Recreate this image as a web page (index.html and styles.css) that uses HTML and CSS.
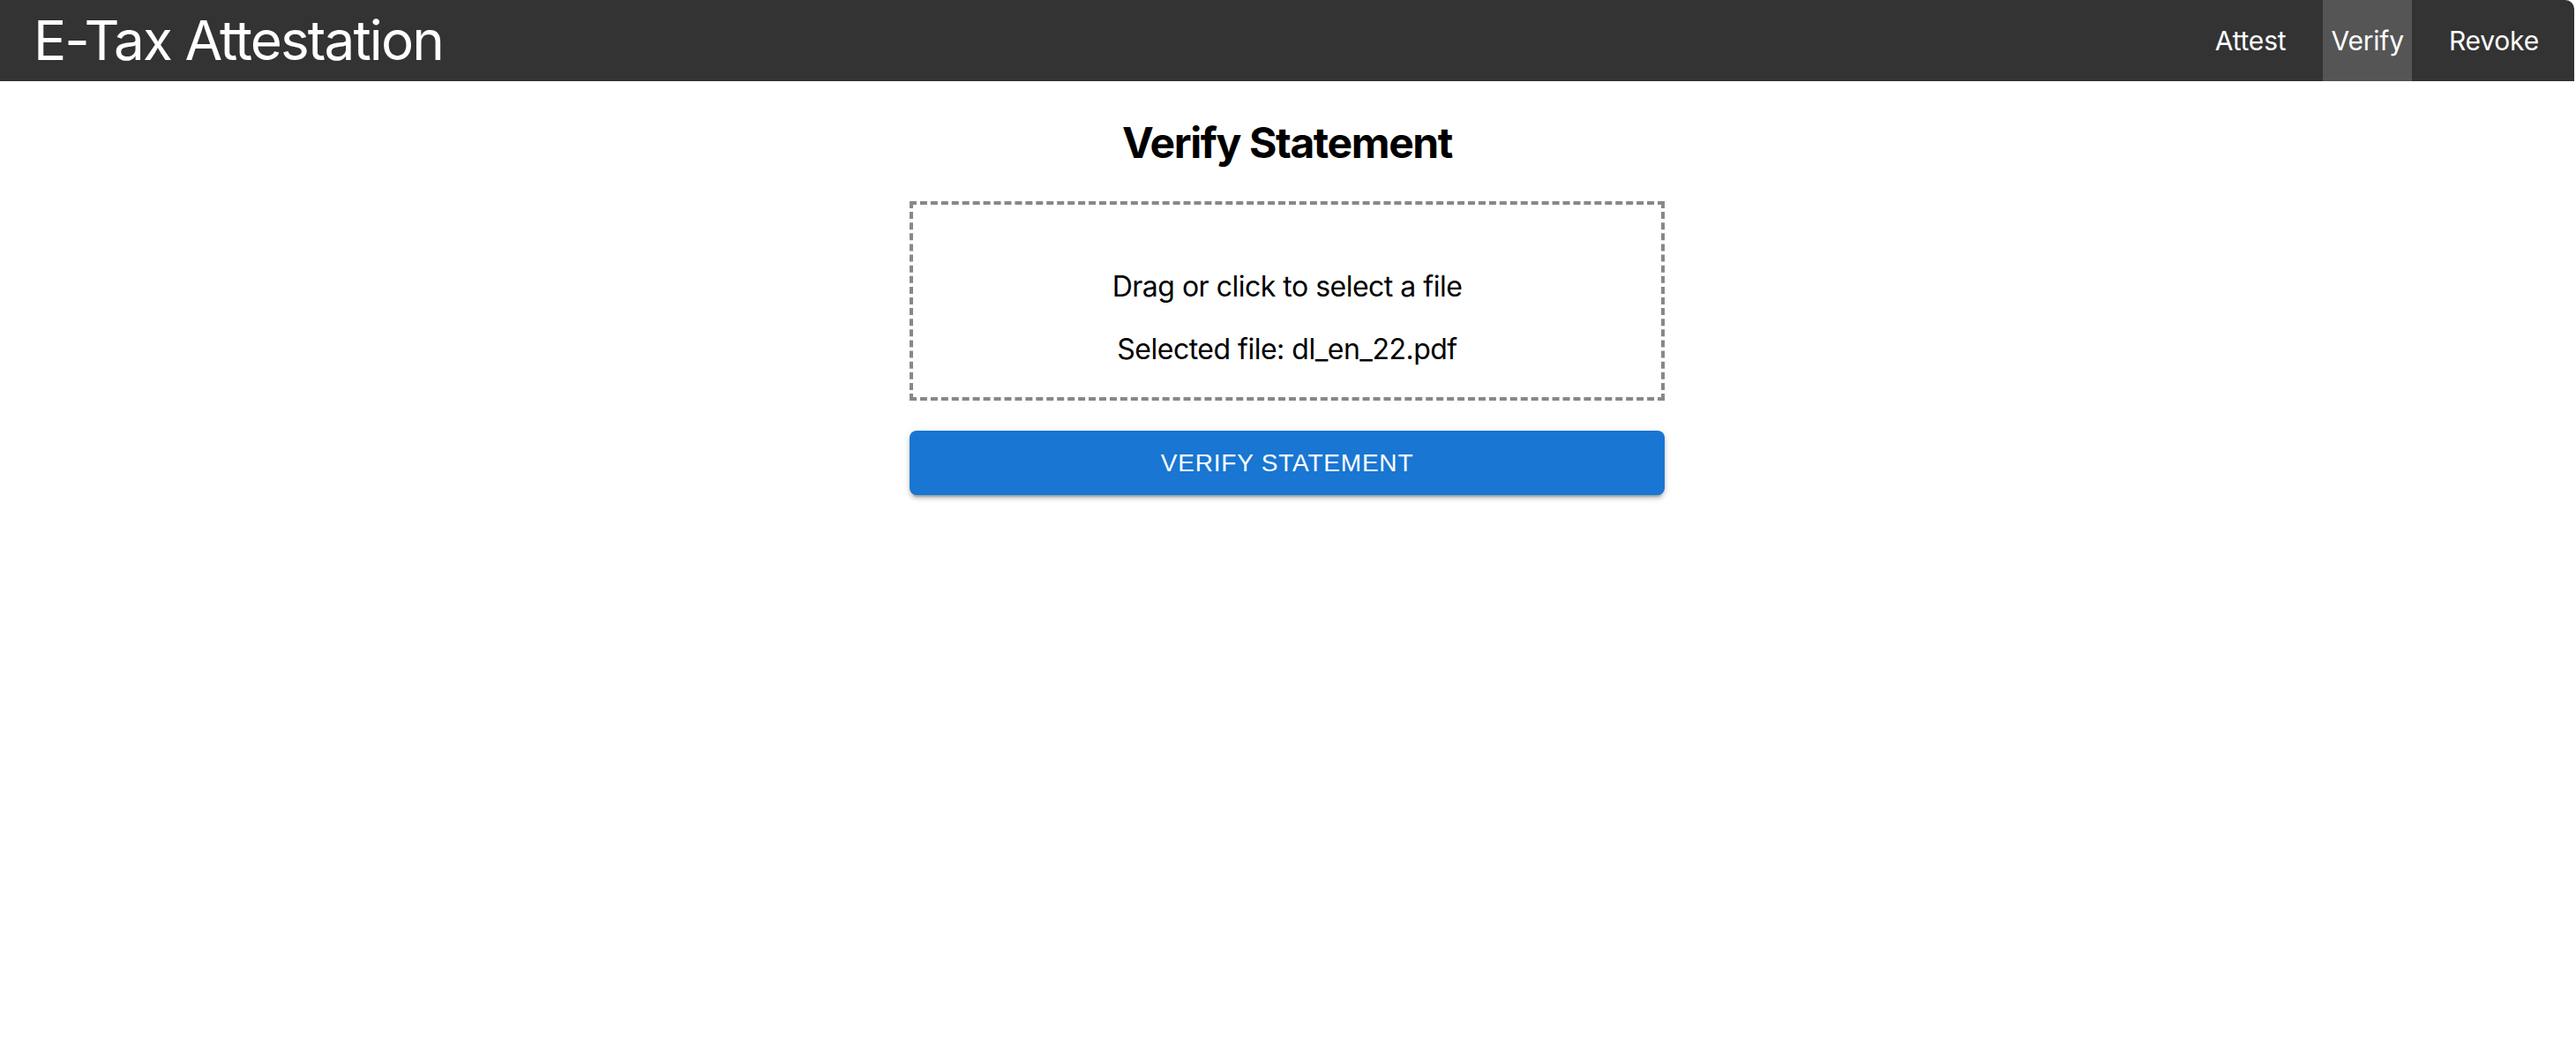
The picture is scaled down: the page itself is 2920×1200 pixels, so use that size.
FILE: index.html
```html
<!DOCTYPE html>
<html lang="en">
<head>
<meta charset="utf-8">
<title>E-Tax Attestation</title>
<link rel="stylesheet" href="styles.css">
</head>
<body>
<div class="app">
  <header class="topbar">
    <div class="brand">E-Tax Attestation</div>
    <nav class="nav">
      <a class="nav-item">Attest</a>
      <a class="nav-item active">Verify</a>
      <a class="nav-item">Revoke</a>
    </nav>
  </header>
  <main class="content">
    <h3 class="page-title">Verify Statement</h3>
    <div class="dropzone">
      <p class="dz-hint">Drag or click to select a file</p>
      <div class="dz-file">Selected file: dl_en_22.pdf</div>
    </div>
    <button class="btn-primary">Verify Statement</button>
  </main>
</div>
</body>
</html>
```
FILE: styles.css
```css
html, body {
  margin: 0;
  padding: 0;
  background: #ffffff;
}
body {
  font-family: Inter, "Noto Sans", "Liberation Sans", sans-serif;
  color: #000;
}
.app {
  margin-right: 2px;
  min-height: 1200px;
}
.topbar {
  height: 92px;
  background: #333333;
  color: #fff;
  display: flex;
  align-items: center;
  justify-content: space-between;
  padding: 0 31px 0 38px;
  border-top-right-radius: 10px;
}
.brand {
  font-size: 62px;
  font-weight: 400;
  letter-spacing: -1.9px;
  line-height: 1;
}
.nav {
  display: flex;
  align-self: stretch;
  gap: 33px;
}
.nav-item {
  display: flex;
  align-items: center;
  padding: 0 9px;
  font-size: 30px;
  letter-spacing: -0.2px;
  color: #fff;
  cursor: pointer;
}
.nav-item.active {
  background: #555555;
}
.content {
  display: flex;
  flex-direction: column;
  align-items: center;
}
.page-title {
  font-size: 48px;
  font-weight: 700;
  letter-spacing: -1.4px;
  line-height: 58px;
  margin: 41px 0 37px;
}
.dropzone {
  box-sizing: border-box;
  width: 856px;
  border: 4px dashed #888888;
  padding: 41px 40px 35px;
  text-align: center;
  font-size: 32px;
  letter-spacing: -0.5px;
}
.dz-hint {
  margin: 32px 0;
}
.btn-primary {
  box-sizing: border-box;
  width: 856px;
  height: 73px;
  margin-top: 34px;
  border: 0;
  border-radius: 8px;
  background: #1976d2;
  color: #fff;
  font-family: "Liberation Sans", Arial, sans-serif;
  font-size: 28px;
  font-weight: 400;
  letter-spacing: 0.8px;
  text-transform: uppercase;
  box-shadow: 0 6px 2px -4px rgba(0,0,0,0.2), 0 4px 4px 0 rgba(0,0,0,0.14), 0 2px 10px 0 rgba(0,0,0,0.12);
  cursor: pointer;
}
```
